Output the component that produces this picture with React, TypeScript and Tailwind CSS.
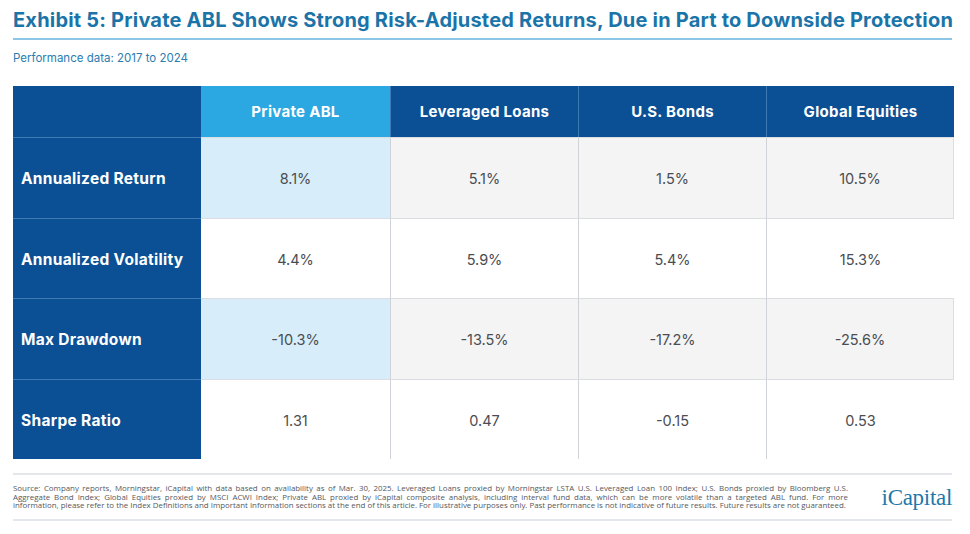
const columns = ['Private ABL', 'Leveraged Loans', 'U.S. Bonds', 'Global Equities']

const rows = [
  { label: 'Annualized Return', values: ['8.1%', '5.1%', '1.5%', '10.5%'], shaded: true, h: 'h-[81px]' },
  { label: 'Annualized Volatility', values: ['4.4%', '5.9%', '5.4%', '15.3%'], shaded: false, h: 'h-[80px]' },
  { label: 'Max Drawdown', values: ['-10.3%', '-13.5%', '-17.2%', '-25.6%'], shaded: true, h: 'h-[81px]' },
  { label: 'Sharpe Ratio', values: ['1.31', '0.47', '-0.15', '0.53'], shaded: false, h: 'h-[80px]' },
]

const footnote = [
  'Source: Company reports, Morningstar, iCapital with data based on availability as of Mar. 30, 2025. Leveraged Loans proxied by Morningstar LSTA U.S. Leveraged Loan 100 Index; U.S. Bonds proxied by Bloomberg U.S.',
  'Aggregate Bond Index; Global Equities proxied by MSCI ACWI Index; Private ABL proxied by iCapital composite analysis, including interval fund data, which can be more volatile than a targeted ABL fund. For more',
  'information, please refer to the Index Definitions and Important Information sections at the end of this article. For illustrative purposes only. Past performance is not indicative of future results. Future results are not guaranteed.',
]

function HeaderRow() {
  return (
    <div className="grid grid-cols-[188px_189px_188px_188px_188px] h-[51px]">
      <div className="bg-[#0b5094]" />
      {columns.map((col, i) => (
        <div
          key={col}
          className={
            i === 0
              ? 'flex items-center justify-center pt-[2px] bg-[#2ba8e2] text-white font-bold text-[15px] tracking-[0.3px]'
              : 'flex items-center justify-center pt-[2px] bg-[#0b5094] text-white font-bold text-[15px] tracking-[0.3px] border-l border-[#3e79b3]'
          }
        >
          {col}
        </div>
      ))}
    </div>
  )
}

export default function App() {
  return (
    <div className="w-[970px] h-[534px] bg-white pl-[13px] pr-[16px] pt-[8px] font-['Inter','Lato',sans-serif]">
      <h1 className="text-[20px] font-bold text-[#1b74a8] leading-[24px] tracking-[0.2px] whitespace-nowrap">
        Exhibit 5: Private ABL Shows Strong Risk-Adjusted Returns, Due in Part to Downside Protection
      </h1>
      <div className="mt-[6px] h-[2px] w-[939px] bg-[#8cc7e6]" />
      <p className="mt-[11px] text-[11.5px] text-[#2a7db0] leading-[14px]">Performance data: 2017 to 2024</p>

      <div className="mt-[21px] w-[941px]">
        <HeaderRow />
        {rows.map((row) => (
          <div key={row.label} className={`grid grid-cols-[188px_189px_188px_188px_188px] ${row.h}`}>
            <div className="flex items-center pl-[8px] pt-[2px] bg-[#0b5094] text-white font-bold text-[15.5px] tracking-[0.3px] border-t border-[#3e79b3]">
              {row.label}
            </div>
            {row.values.map((v, i) => {
              let bg = row.shaded ? 'bg-[#f4f4f5]' : 'bg-white'
              if (i === 0) bg = row.shaded ? 'bg-[#d7edf9]' : 'bg-white'
              return (
                <div
                  key={i}
                  className={`flex items-center justify-center pt-[2px] text-[14.5px] text-[#4a4d52] border-t border-[#dadde1] ${
                    i > 0 ? 'border-l border-l-[#cfd3d8]' : ''
                  } ${i === 3 && row.shaded ? 'border-r border-r-[#dadde1]' : ''} ${bg}`}
                >
                  {v}
                </div>
              )
            })}
          </div>
        ))}
      </div>

      <div className="mt-[14px] w-[939px] h-[2px] bg-[#e3e6ea]" />
      <div className="flex items-center w-[939px] h-[44px]">
        <div className="w-[835px] text-[7.9px] leading-[8.6px] text-[#55585d] font-['Open_Sans',sans-serif]">
          <div className="text-justify [text-align-last:justify] whitespace-nowrap">{footnote[0]}</div>
          <div className="text-justify [text-align-last:justify] whitespace-nowrap">{footnote[1]}</div>
          <div className="whitespace-nowrap">{footnote[2]}</div>
        </div>
        <div className="ml-auto text-[23px] leading-none text-[#1d78a9] font-['Liberation_Serif',serif] tracking-[-0.3px]">
          iCapital
        </div>
      </div>
      <div className="w-[939px] h-[2px] bg-[#e3e6ea]" />
    </div>
  )
}
